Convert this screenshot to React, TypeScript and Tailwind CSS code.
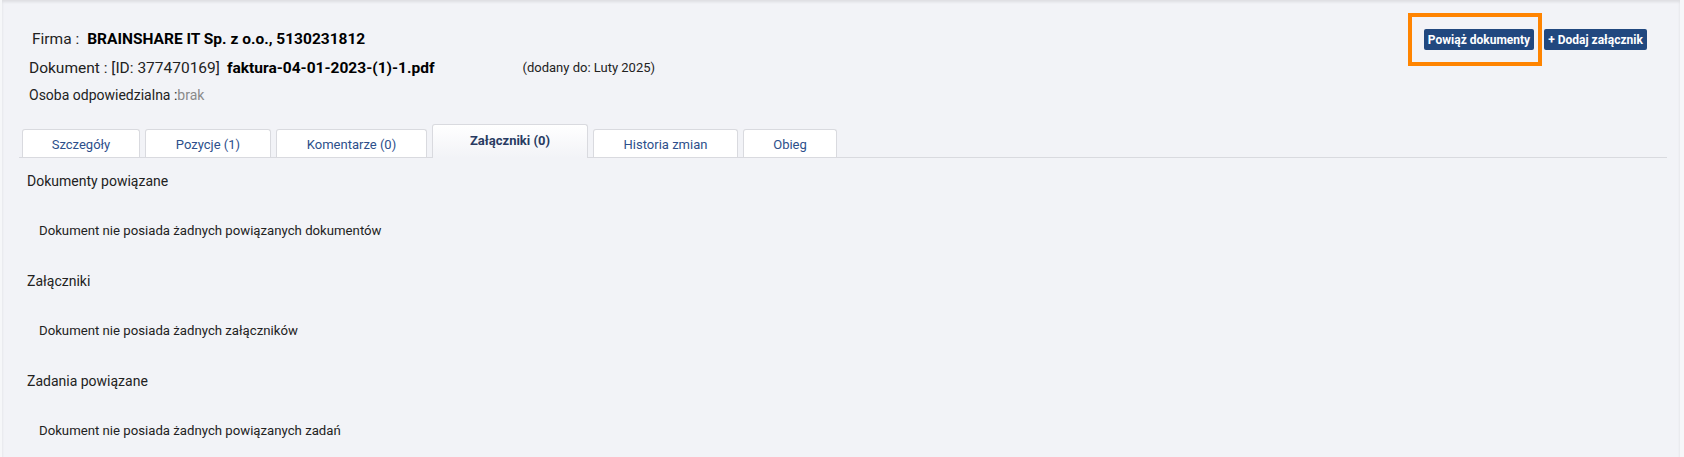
const tabs = [
  { label: "Szczegóły", w: "w-[118px]" },
  { label: "Pozycje (1)", w: "w-[126px]" },
  { label: "Komentarze (0)", w: "w-[151px]" },
  { label: "Załączniki (0)", w: "w-[156px]", active: true },
  { label: "Historia zmian", w: "w-[145px]" },
  { label: "Obieg", w: "w-[94px]" },
];

const sections = [
  { title: "Dokumenty powiązane", empty: "Dokument nie posiada żadnych powiązanych dokumentów" },
  { title: "Załączniki", empty: "Dokument nie posiada żadnych załączników" },
  { title: "Zadania powiązane", empty: "Dokument nie posiada żadnych powiązanych zadań" },
];

export default function App() {
  return (
    <div
      className="min-h-[457px] bg-[#f2f3f7] text-[#222] shadow-[inset_0_2px_3px_rgba(0,0,0,0.09)] border-l-[2px] border-r-[4px] border-[#f6f7f9]"
      style={{ fontFamily: "Roboto, 'Liberation Sans', sans-serif" }}
    >
      {/* Header: document info + actions */}
      <div className="flex items-start justify-between pt-[27px] pl-[27px] pr-[33px]">
        <div className="flex flex-col">
          <div className="h-6 leading-6 text-[15.5px] ml-[3px]">
            Firma :<span className="ml-[8px] font-bold text-black">BRAINSHARE IT Sp. z o.o., 5130231812</span>
          </div>
          <div className="mt-[5px] h-6 leading-6 text-[15.5px] flex items-center">
            <span>Dokument : [ID: 377470169]</span>
            <span className="ml-[7px] font-bold text-black">faktura-04-01-2023-(1)-1.pdf</span>
            <span className="ml-[88px] text-[13px]">(dodany do: Luty 2025)</span>
          </div>
          <div className="mt-[5px] h-5 leading-5 text-[14px]">
            Osoba odpowiedzialna :<span className="text-[#8a8a8a]">brak</span>
          </div>
        </div>
        <div className="flex gap-[10px] mt-[2px]">
          <button className="relative h-[21px] w-[110px] rounded-[2px] bg-[#21487f] text-[12px] font-bold text-white">
            Powiąż dokumenty
            <span className="pointer-events-none absolute -left-[16px] -top-[16px] -right-[8px] -bottom-[16px] border-[4px] border-[#ff8400]" />
          </button>
          <button className="h-[21px] w-[103px] rounded-[2px] bg-[#21487f] text-[12px] font-bold text-white">
            + Dodaj załącznik
          </button>
        </div>
      </div>

      {/* Tabs */}
      <div className="mt-[19px] ml-[17px] mr-[13px] flex items-end gap-[5px] border-b border-[#d9dadf] pl-[3px]">
        {tabs.map((t) =>
          t.active ? (
            <div
              key={t.label}
              className={`${t.w} -mb-px h-[34px] rounded-t-[3px] border border-b-0 border-[#d9dadf] bg-gradient-to-b from-white to-[#f2f3f7] pt-[6px] text-center text-[13px] font-bold text-[#283b62]`}
            >
              {t.label}
            </div>
          ) : (
            <div
              key={t.label}
              className={`${t.w} h-[28px] rounded-t-[3px] border border-b-0 border-[#d9dadf] bg-white pt-[5px] text-center text-[13px] text-[#2d4f8b]`}
            >
              {t.label}
            </div>
          )
        )}
      </div>

      {/* Attachments tab content */}
      <div className="flex flex-col pt-[13px] pl-[25px]">
        {sections.map((s) => (
          <div key={s.title} className="flex h-[100px] flex-col">
            <div className="h-5 leading-5 text-[14px]">{s.title}</div>
            <div className="mt-[31px] ml-[12px] h-[18px] leading-[18px] text-[13.2px]">{s.empty}</div>
          </div>
        ))}
      </div>
    </div>
  );
}
